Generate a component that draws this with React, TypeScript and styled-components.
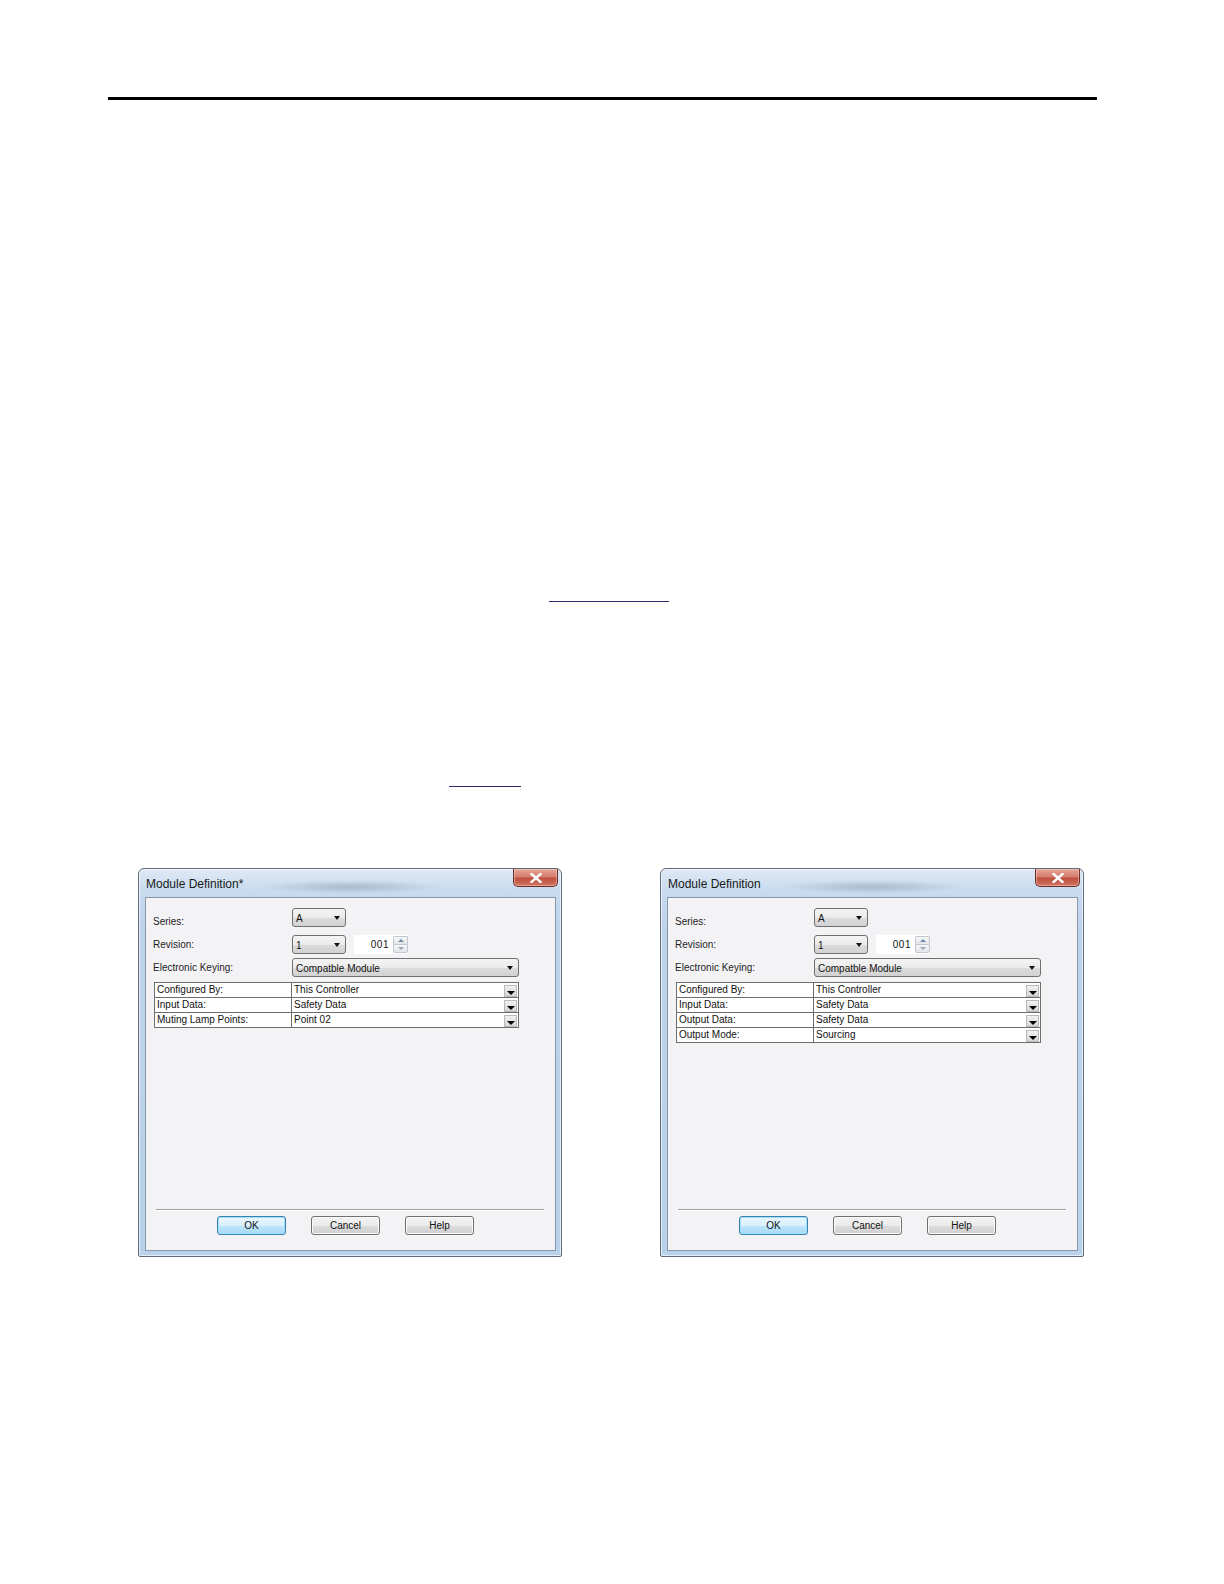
import React from "react";
import styled, { createGlobalStyle, css } from "styled-components";

const Global = createGlobalStyle`
  html, body { margin: 0; padding: 0; background: #ffffff; overflow: hidden; }
  body { font-family: "Liberation Sans", Arial, sans-serif; }
  #root { width: 1224px; height: 1584px; overflow: hidden; }
`;

const Page = styled.div`
  width: 1224px;
  height: 1584px;
  overflow: hidden;
  background: #ffffff;
  display: flow-root;
`;

const Rule = styled.div`
  margin: 97px 0 0 108px;
  width: 989px;
  height: 3px;
  background: #000000;
`;

const LinkLine = styled.a<{ $top: number; $left: number; $w: number }>`
  display: block;
  margin-top: ${(p) => p.$top}px;
  margin-left: ${(p) => p.$left}px;
  width: ${(p) => p.$w}px;
  height: 0;
  border-bottom: 1px solid #2e2b6e;
`;

const DialogRow = styled.div`
  display: flex;
  gap: 98px;
  margin-top: 81px;
  padding-left: 138px;
`;

const Frame = styled.div`
  width: 424px;
  height: 389px;
  flex: none;
  box-sizing: border-box;
  border: 1px solid #5f6b78;
  border-radius: 6px 6px 2px 2px;
  background: linear-gradient(180deg, #dfe9f5 0px, #c9dcf0 20px, #bdd3ea 60px, #b9d1ea 100%);
  display: flex;
  flex-direction: column;
  padding: 0 5px 5px 6px;
  box-shadow: inset 0 0 0 1px rgba(255, 255, 255, 0.6);
`;

const TitleBar = styled.div`
  height: 28px;
  display: flex;
  align-items: flex-start;
  justify-content: space-between;
  background: radial-gradient(ellipse 90px 7px at 50% 64%, rgba(110, 120, 140, 0.35), rgba(110, 120, 140, 0) 100%);
`;

const Title = styled.span`
  font-family: "Liberation Sans", Arial, sans-serif;
  font-size: 12px;
  color: #1a1a1a;
  margin: 8px 0 0 1px;
`;

const Close = styled.div`
  width: 45px;
  height: 18px;
  box-sizing: border-box;
  margin-right: -2px;
  border: 1px solid #6b2f2a;
  border-top: none;
  border-radius: 0 0 5px 5px;
  background: linear-gradient(180deg, #e6a597 0%, #d47e6f 45%, #c04f3d 55%, #d07563 100%);
  display: flex;
  align-items: center;
  justify-content: center;
  box-shadow: inset 0 0 0 1px rgba(255, 220, 210, 0.45);
`;

const Client = styled.div`
  flex: 1;
  box-sizing: border-box;
  border: 1px solid #8796a8;
  background: #f3f2f5;
  display: flex;
  flex-direction: column;
`;

const Form = styled.div`
  display: flex;
  flex-direction: column;
  padding: 10px 0 0 7px;
`;

const FieldRow = styled.div<{ $gap: number }>`
  display: flex;
  align-items: center;
  height: 19px;
  margin-top: ${(p) => p.$gap}px;
`;

const Label = styled.span<{ $drop?: number }>`
  width: 139px;
  flex: none;
  font-size: 10px;
  color: #1e1e1e;
  padding-top: ${(p) => p.$drop ?? 0}px;
`;

const Combo = styled.div<{ $w: number }>`
  width: ${(p) => p.$w}px;
  height: 19px;
  box-sizing: border-box;
  border: 1px solid #707070;
  border-radius: 3px;
  background: linear-gradient(180deg, #f4f4f4 0%, #ebebeb 50%, #dcdcdc 51%, #d2d2d2 100%);
  display: flex;
  align-items: center;
  justify-content: space-between;
  padding: 0 5px 0 3px;
  font-size: 10px;
  color: #111;
`;

const ComboText = styled.span`
  padding-top: 1px;
`;

const Arrow = styled.span`
  width: 0;
  height: 0;
  border-left: 3.5px solid transparent;
  border-right: 3.5px solid transparent;
  border-top: 4px solid #111;
`;

const Spin = styled.div`
  margin-left: 8px;
  width: 54px;
  height: 19px;
  box-sizing: border-box;
  background: #ffffff;
  display: flex;
  align-items: center;
  justify-content: flex-end;
  font-size: 10px;
  color: #111;
  letter-spacing: 0.5px;
`;

const SpinText = styled.span`
  margin-right: 4px;
`;

const SpinButtons = styled.div`
  width: 15px;
  height: 17px;
  display: flex;
  flex-direction: column;
`;

const SpinHalf = styled.div<{ $up?: boolean }>`
  flex: 1;
  box-sizing: border-box;
  border: 1px solid #c2c7cf;
  ${(p) => (p.$up ? css`border-bottom: none; border-radius: 2px 2px 0 0;` : css`border-radius: 0 0 2px 2px;`)}
  background: linear-gradient(180deg, #f7f7f7, #e3e5e8);
  display: flex;
  align-items: center;
  justify-content: center;
`;

const SpinTri = styled.span<{ $up?: boolean }>`
  width: 0;
  height: 0;
  border-left: 3px solid transparent;
  border-right: 3px solid transparent;
  ${(p) =>
    p.$up
      ? css`border-bottom: 3px solid #6f8bab;`
      : css`border-top: 3px solid #9aaabd;`}
`;

const Grid = styled.div`
  margin: 5px 0 0 8px;
  width: 365px;
  box-sizing: border-box;
  border: 1px solid #6e6e6e;
  border-bottom: none;
  background: #ffffff;
  display: flex;
  flex-direction: column;
`;

const GridRow = styled.div`
  display: flex;
  height: 15px;
  border-bottom: 1px solid #6e6e6e;
  box-sizing: border-box;
`;

const GridLabel = styled.div`
  width: 137px;
  flex: none;
  border-right: 1px solid #6e6e6e;
  font-size: 10px;
  line-height: 14px;
  padding-left: 2px;
  color: #111;
  box-sizing: border-box;
`;

const GridValue = styled.div`
  flex: 1;
  display: flex;
  align-items: center;
  justify-content: space-between;
  font-size: 10px;
  line-height: 14px;
  padding-left: 2px;
  color: #111;
`;

const DropBtn = styled.div`
  width: 13px;
  height: 12px;
  margin-right: 1px;
  margin-top: 2px;
  box-sizing: border-box;
  border: 1px solid #b8b8b8;
  background: linear-gradient(180deg, #f2f2f2, #d4d4d4);
  display: flex;
  align-items: flex-end;
  justify-content: center;
  padding-bottom: 1px;
`;

const DropTri = styled.span`
  width: 0;
  height: 0;
  border-left: 4px solid transparent;
  border-right: 4px solid transparent;
  border-top: 4px solid #000;
`;

const Spacer = styled.div`
  flex: 1;
`;

const Separator = styled.div`
  margin: 0 11px 0 10px;
  height: 1px;
  background: #a0a0a0;
  border-bottom: 1px solid #ffffff;
`;

const Buttons = styled.div`
  display: flex;
  gap: 25px;
  margin: 5px 0 15px 71px;
`;

const Button = styled.div<{ $default?: boolean }>`
  width: 69px;
  height: 19px;
  box-sizing: border-box;
  border-radius: 3px;
  display: flex;
  align-items: center;
  justify-content: center;
  font-size: 10px;
  color: #111;
  ${(p) =>
    p.$default
      ? css`
          border: 1px solid #3c7fb1;
          background: linear-gradient(180deg, #eaf6fd 0%, #d9f0fc 50%, #bee6fd 51%, #a7d9f5 100%);
          box-shadow: inset 0 0 0 1px #9fe0fb;
        `
      : css`
          border: 1px solid #707070;
          background: linear-gradient(180deg, #f2f2f2 0%, #ebebeb 50%, #dddddd 51%, #cfcfcf 100%);
          box-shadow: inset 0 0 0 1px #fbfbfb;
        `}
`;

type Row = [string, string];

function CloseIcon() {
  return (
    <svg width="12" height="10" viewBox="0 0 12 10">
      <path d="M1.5 1 L10.5 9 M10.5 1 L1.5 9" stroke="#ffffff" strokeWidth="2.4" strokeLinecap="square" />
    </svg>
  );
}

function Dialog({ title, rows }: { title: string; rows: Row[] }) {
  return (
    <Frame>
      <TitleBar>
        <Title>{title}</Title>
        <Close>
          <CloseIcon />
        </Close>
      </TitleBar>
      <Client>
        <Form>
          <FieldRow $gap={0}>
            <Label $drop={7}>Series:</Label>
            <Combo $w={54}>
              <ComboText>A</ComboText>
              <Arrow />
            </Combo>
          </FieldRow>
          <FieldRow $gap={8}>
            <Label>Revision:</Label>
            <Combo $w={54}>
              <ComboText>1</ComboText>
              <Arrow />
            </Combo>
            <Spin>
              <SpinText>001</SpinText>
              <SpinButtons>
                <SpinHalf $up>
                  <SpinTri $up />
                </SpinHalf>
                <SpinHalf>
                  <SpinTri />
                </SpinHalf>
              </SpinButtons>
            </Spin>
          </FieldRow>
          <FieldRow $gap={4}>
            <Label>Electronic Keying:</Label>
            <Combo $w={227}>
              <ComboText>Compatble Module</ComboText>
              <Arrow />
            </Combo>
          </FieldRow>
        </Form>
        <Grid>
          {rows.map(([k, v]) => (
            <GridRow key={k}>
              <GridLabel>{k}</GridLabel>
              <GridValue>
                <span>{v}</span>
                <DropBtn>
                  <DropTri />
                </DropBtn>
              </GridValue>
            </GridRow>
          ))}
        </Grid>
        <Spacer />
        <Separator />
        <Buttons>
          <Button $default>OK</Button>
          <Button>Cancel</Button>
          <Button>Help</Button>
        </Buttons>
      </Client>
    </Frame>
  );
}

export default function App() {
  return (
    <Page>
      <Global />
      <Rule />
      <LinkLine $top={501} $left={549} $w={120} />
      <LinkLine $top={184} $left={449} $w={72} />
      <DialogRow>
        <Dialog
          title="Module Definition*"
          rows={[
            ["Configured By:", "This Controller"],
            ["Input Data:", "Safety Data"],
            ["Muting Lamp Points:", "Point 02"],
          ]}
        />
        <Dialog
          title="Module Definition"
          rows={[
            ["Configured By:", "This Controller"],
            ["Input Data:", "Safety Data"],
            ["Output Data:", "Safety Data"],
            ["Output Mode:", "Sourcing"],
          ]}
        />
      </DialogRow>
    </Page>
  );
}
